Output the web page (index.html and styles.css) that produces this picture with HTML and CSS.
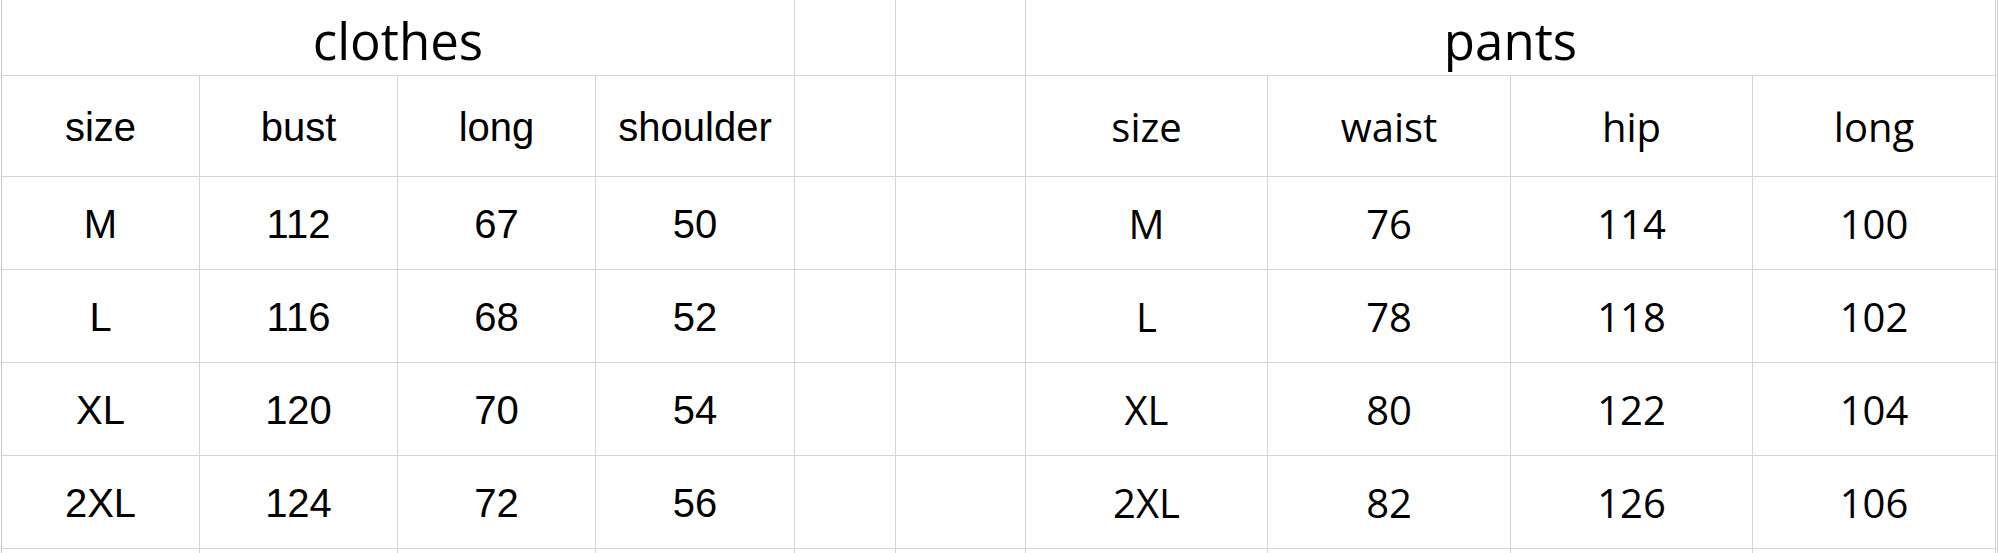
FILE: index.html
```html
<!DOCTYPE html>
<html>
<head>
<meta charset="utf-8">
<link rel="stylesheet" href="styles.css">
</head>
<body>
<div class="sheet">
  <div class="cell wide title">clothes</div>
  <div class="cell"></div>
  <div class="cell"></div>
  <div class="cell wide title">pants</div>
  <div class="cell"></div>

  <div class="cell a">size</div>
  <div class="cell a">bust</div>
  <div class="cell a">long</div>
  <div class="cell a">shoulder</div>
  <div class="cell"></div>
  <div class="cell"></div>
  <div class="cell y">size</div>
  <div class="cell y">waist</div>
  <div class="cell y">hip</div>
  <div class="cell y">long</div>
  <div class="cell"></div>

  <div class="cell a">M</div>
  <div class="cell a">112</div>
  <div class="cell a">67</div>
  <div class="cell a">50</div>
  <div class="cell"></div>
  <div class="cell"></div>
  <div class="cell y">M</div>
  <div class="cell y">76</div>
  <div class="cell y">114</div>
  <div class="cell y">100</div>
  <div class="cell"></div>

  <div class="cell a">L</div>
  <div class="cell a">116</div>
  <div class="cell a">68</div>
  <div class="cell a">52</div>
  <div class="cell"></div>
  <div class="cell"></div>
  <div class="cell y">L</div>
  <div class="cell y">78</div>
  <div class="cell y">118</div>
  <div class="cell y">102</div>
  <div class="cell"></div>

  <div class="cell a">XL</div>
  <div class="cell a">120</div>
  <div class="cell a">70</div>
  <div class="cell a">54</div>
  <div class="cell"></div>
  <div class="cell"></div>
  <div class="cell y">XL</div>
  <div class="cell y">80</div>
  <div class="cell y">122</div>
  <div class="cell y">104</div>
  <div class="cell"></div>

  <div class="cell a">2XL</div>
  <div class="cell a">124</div>
  <div class="cell a">72</div>
  <div class="cell a">56</div>
  <div class="cell"></div>
  <div class="cell"></div>
  <div class="cell y">2XL</div>
  <div class="cell y">82</div>
  <div class="cell y">126</div>
  <div class="cell y">106</div>
  <div class="cell"></div>

  <div class="cell"></div>
  <div class="cell"></div>
  <div class="cell"></div>
  <div class="cell"></div>
  <div class="cell"></div>
  <div class="cell"></div>
  <div class="cell"></div>
  <div class="cell"></div>
  <div class="cell"></div>
  <div class="cell"></div>
  <div class="cell"></div>
</div>
</body>
</html>
```
FILE: styles.css
```css
html, body {
  margin: 0;
  padding: 0;
  background: #ffffff;
  overflow: hidden;
}

.sheet {
  display: grid;
  grid-template-columns: 198px 198px 198px 199px 101px 130px 242px 243px 242px 243px 1fr;
  grid-template-rows: 76px 101px 93px 93px 93px 93px 93px;
  margin-left: 1px;
  border-left: 1px solid #c6c6c6;
  width: 1997px;
  box-sizing: border-box;
}

.cell {
  box-sizing: border-box;
  border-right: 1px solid #d4d4d4;
  border-bottom: 1px solid #d4d4d4;
  display: flex;
  align-items: center;
  justify-content: center;
  color: #000000;
  white-space: nowrap;
}

.wide {
  grid-column: span 4;
}

.title {
  font-family: "Open Sans", "Noto Sans", sans-serif;
  font-size: 51px;
  padding-top: 4px;
}

.a {
  font-family: "Liberation Sans", Arial, sans-serif;
  font-size: 40px;
  padding-top: 3px;
}

.y {
  font-family: "Open Sans", "Noto Sans", sans-serif;
  font-size: 40px;
  padding-top: 1px;
}
```
